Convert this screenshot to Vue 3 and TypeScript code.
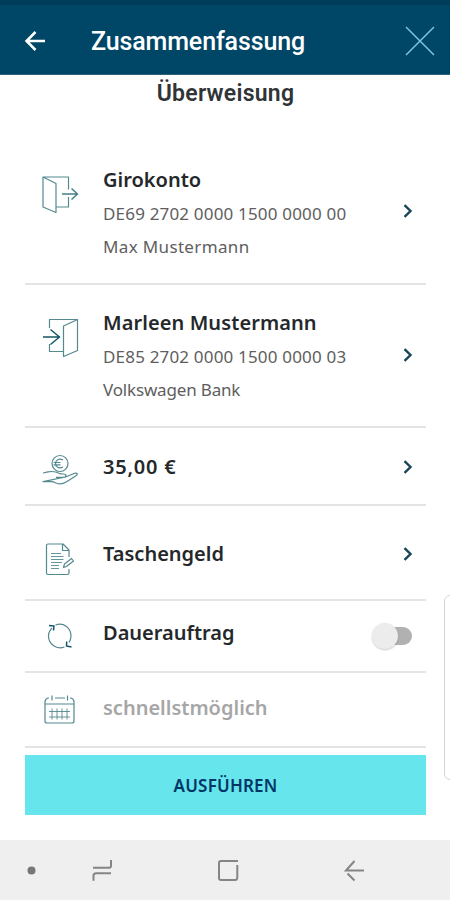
<script setup lang="ts">
import { ref } from 'vue'

interface Row {
  id: string
  title: string
  lines?: string[]
  control: 'chevron' | 'switch' | 'none'
  muted?: boolean
}

const rows: Row[] = [
  { id: 'from', title: 'Girokonto', lines: ['DE69 2702 0000 1500 0000 00', 'Max Mustermann'], control: 'chevron' },
  { id: 'to', title: 'Marleen Mustermann', lines: ['DE85 2702 0000 1500 0000 03', 'Volkswagen Bank'], control: 'chevron' },
  { id: 'amount', title: '35,00 €', control: 'chevron' },
  { id: 'purpose', title: 'Taschengeld', control: 'chevron' },
  { id: 'standing', title: 'Dauerauftrag', control: 'switch' },
  { id: 'date', title: 'schnellstmöglich', control: 'none', muted: true },
]
const standing = ref(false)
</script>

<template>
  <div class="screen">
    <header class="bar">
      <svg class="back" width="22" height="22" viewBox="0 0 22 22"><path d="M21 11H2.500M11.500 2L2.500 11l9 9" /></svg>
      <h1>Zusammenfassung</h1>
      <svg class="close" width="30" height="30" viewBox="0 0 30 30"><path d="M1 1l28 28M29 1L1 29" /></svg>
    </header>

    <main>
      <h2>Überweisung</h2>
      <section v-for="row in rows" :key="row.id" class="row" :class="row.id">
        <svg v-if="row.id === 'from'" class="icon" width="40" height="40" viewBox="0 0 40 40">
          <path d="M3 3h25.500v12.500M28.500 23v10H16M3 3l13 6.500v29L3 33z" />
          <path class="arrow" d="M22 20h15.500M31.500 14.500l6 5.500-6 5.500" />
        </svg>
        <svg v-else-if="row.id === 'to'" class="icon" width="40" height="40" viewBox="0 0 40 40">
          <path d="M9.500 11V2.500h28v31L23.500 39.500V9l14-6.500M9.500 27v7.500h14" />
          <path class="strong" d="M3 20h17M10.500 12.500l9 7.500-9 7.500" />
        </svg>
        <svg v-else-if="row.id === 'amount'" class="icon" width="40" height="40" viewBox="0 0 40 40">
          <circle cx="20" cy="11.500" r="8" />
          <path d="M23 8c-4-2-7.500 0-7.500 3.500s3.500 5.500 7.500 3.500M13.500 10.500h7M13.500 12.800h7" />
          <path d="M3 21l5-1.200c4-.6 8-.3 11 1.400q1.500.8 4 .8c4 0 4 3.300 0 3.300h-7M25.500 25l8.500-3.500c3-1.200 4.500.5 2 2.200L27 29.500c-4.500 2.800-8 3-11 1.500-2-1-3-1.300-5-1.300H3z" />
        </svg>
        <svg v-else-if="row.id === 'purpose'" class="icon" width="40" height="40" viewBox="0 0 40 40">
          <path d="M29 19v-7l-6-6H8q-1.500 0-1.500 1.500v27.500q0 1.500 1.500 1.500h19.500q1.500 0 1.500-1.500v-4M22.500 6v6.500H29" />
          <path class="light" d="M11 15.500h10M11 18.500h12.500M11 21.500h12.500M11 24.500h11M11 27.500h8M11 30.500h8" />
          <path d="M23.500 29.500l1-3.500 7-5.500 2 2.500-7 5.500z" />
        </svg>
        <svg v-else-if="row.id === 'standing'" class="icon" width="40" height="40" viewBox="0 0 40 40">
          <path d="M15.500 9c8.500-3 15.500 3.500 15.500 11 0 2.200-.7 4.500-2 6.500M24.500 31c-8.500 3-16-3.500-16-11 0-3 1.200-5.700 3.500-8" />
          <path class="strong" d="M9 9.500l5 .5-.5 4.500M31.500 31l-5-1 .2-4.500" />
        </svg>
        <svg v-else class="icon" width="40" height="40" viewBox="0 0 40 40">
          <path d="M9 8H8Q5 9 5 12v19q0 2 2 2h25q2 0 2-2V12q0-3-3-4h-1M15 8h10M5 14h29" />
          <path d="M12 5.500v5M27.500 5.500v5" />
          <path class="light" d="M9 21.500h21M9 27h21M12 18.500v11M17 18.500v11M22 18.500v11M27 18.500v11" />
        </svg>

        <div class="text">
          <h3 :class="{ muted: row.muted }">{{ row.title }}</h3>
          <p v-for="(line, i) in row.lines" :key="line" :class="'line' + i">{{ line }}</p>
        </div>

        <svg v-if="row.control === 'chevron'" class="chevron" width="10" height="16" viewBox="0 0 10 16"><path d="M1.500 2.200L7.500 8l-6 5.800" /></svg>
        <button v-else-if="row.control === 'switch'" class="switch" :class="{ on: standing }" role="switch" :aria-checked="standing" @click="standing = !standing"><i /></button>
      </section>
      <button class="submit"><span>AUSFÜHREN</span></button>
    </main>

    <nav>
      <svg width="450" height="60" viewBox="0 0 450 60">
        <circle cx="31.500" cy="30.500" r="4" />
        <path d="M93 27.700h16q2 0 2-2V20M111 33.200H96q-2.500 0-2.500 2.500v5" />
        <path d="M238 21h-17q-2 0-2 2v15q0 2 2 2h14q2.300 0 2.300-2.500V25" />
        <path d="M364 30.500h-18l8.500-9.500M347.500 33.500l7 7" />
      </svg>
    </nav>
    <div class="edge" />
  </div>
</template>

<style>
body { margin: 0; overflow: hidden; }
</style>

<style scoped>
* { box-sizing: border-box; }
.screen { position: relative; display: flex; flex-direction: column; width: 450px; height: 900px; overflow: hidden; background: #fff; font-family: "Noto Sans", sans-serif; }
svg { flex: none; fill: none; }
h1, h2, h3, p { margin: 0; white-space: nowrap; }
.bar { display: flex; align-items: center; height: 75px; padding: 5px 15px 0 24px; background: #004666; border-top: 5px solid #003d5b; border-bottom: 1px solid #2c607c; }
.back { stroke: #fff; stroke-width: 2.500; margin-top: -3px; }
h1 { flex: 1; margin-left: 45px; color: #fff; font: 500 25px/30px Roboto, sans-serif; letter-spacing: -.13px; }
.close { stroke: #79c5e2; stroke-width: 1.500; margin-top: -3px; }
main { display: flex; flex-direction: column; height: 765px; padding: 0 24px 25px 25px; }
h2 { height: 66px; padding-top: 4px; text-align: center; color: #303437; font: 600 23px/30px Roboto, sans-serif; letter-spacing: .25px; }
.row { display: flex; flex: none; padding: 0 13px 0 15px; border-bottom: 2px solid #e4e4e4; }
.from { height: 144px; }
.to { height: 143px; }
.amount { height: 78px; }
.purpose { height: 95px; }
.standing { height: 72px; }
.date { height: 75px; }
.icon { stroke: #558990; stroke-width: 1.200; stroke-linejoin: round; }
.strong { stroke: #155766; stroke-width: 1.500; }
.arrow { stroke: #457f88; stroke-width: 1.500; }
.light { stroke-width: .9; }
.from .icon { margin-top: 33px; }
.to .icon { margin-top: 32px; }
.amount .icon { margin-top: 24px; }
.purpose .icon { margin-top: 32px; }
.standing .icon { margin-top: 15px; }
.date .icon { margin-top: 17px; }
.text { flex: 1; margin-left: 23px; }
h3 { color: #25282b; font-size: 20px; line-height: 30px; font-weight: 600; }
h3.muted { color: #a6a6a6; }
p { color: #5e5e5e; font-size: 17px; line-height: 33px; }
.from .text { padding-top: 24px; }
.to .text { padding-top: 23px; }
.to h3 { letter-spacing: .09px; }
.line0 { margin-top: 2px; letter-spacing: .18px; }
.from .line1 { letter-spacing: .35px; }
.to .line1 { letter-spacing: -.17px; }
.amount h3 { letter-spacing: .8px; }
.amount .text { padding-top: 24px; }
.purpose .text { padding-top: 33px; }
.standing .text { padding-top: 17px; }
.date .text { padding-top: 20px; }
.chevron { stroke: #164658; stroke-width: 2.400; margin-top: 62px; }
.amount .chevron { margin-top: 31px; }
.purpose .chevron { margin-top: 40px; }
.switch { display: flex; align-items: center; width: 36px; height: 18px; margin: 26px 1px 0 0; padding: 0; border: 0; border-radius: 9px; background: #b1b1b1; }
.switch i { flex: none; width: 26px; height: 26px; margin-left: -4px; border-radius: 50%; background: #ececec; box-shadow: 0 1px 2px #0003; }
.switch.on i { margin-left: 14px; }
.submit { height: 60px; margin-top: 7px; padding: 1px 0 0; border: 0; background: #66e5ec; color: #003565; font: 600 17px/60px "Noto Sans", sans-serif; letter-spacing: .2px; }
nav { height: 60px; background: #efefef; }
nav svg { display: block; stroke: #858585; stroke-width: 2; }
nav circle { fill: #777; stroke: none; }
.edge { position: absolute; top: 595px; left: 444px; width: 12px; height: 185px; border: 1px solid #d6d6d6; border-radius: 8px; background: #fff; }
</style>
